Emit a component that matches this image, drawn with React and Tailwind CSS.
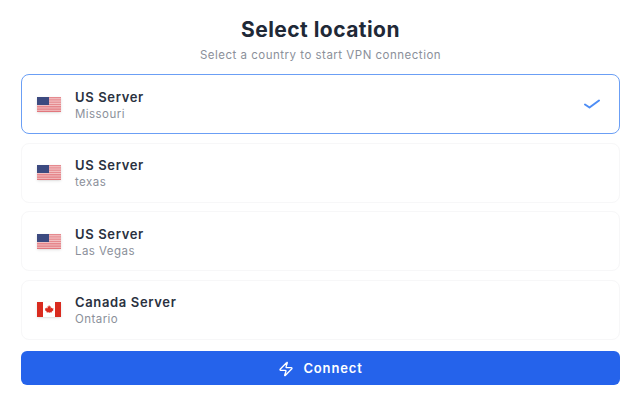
import React from 'react';
import { Zap } from 'lucide-react';

const UsFlag = () => (
  <svg width="24" height="15" viewBox="0 0 24 15" className="shrink-0 shadow-sm">
    <rect width="24" height="15" fill="#f3c4c6" />
    <rect y="0" width="24" height="1.2" fill="#e58a8f" />
    <rect y="2.3" width="24" height="1.2" fill="#e58a8f" />
    <rect y="4.6" width="24" height="1.2" fill="#e58a8f" />
    <rect y="6.9" width="24" height="1.2" fill="#e58a8f" />
    <rect y="9.2" width="24" height="1.2" fill="#e2777d" />
    <rect y="11.5" width="24" height="1.2" fill="#e2777d" />
    <rect y="13.8" width="24" height="1.2" fill="#e2777d" />
    <rect width="12" height="8" fill="#3c4a80" />
  </svg>
);

const CaFlag = () => (
  <svg width="24" height="15" viewBox="0 0 24 15" className="shrink-0 shadow-sm">
    <rect width="24" height="15" fill="#fff" />
    <rect width="6" height="15" fill="#d92b1f" />
    <rect x="18" width="6" height="15" fill="#d92b1f" />
    <path
      d="M12 3l1 1.8 1-.5-.4 2.3 1.3-1 .3.9 1.3-.2-.4 1.4.5.3-2 1.7.2.8-2.3-.3V11h-.6V10.200l-2.300.3.200-.8-2-1.700.500-.3-.400-1.400 1.300.2.300-.9 1.300 1-.400-2.300 1 .5z"
      fill="#d92b1f"
    />
  </svg>
);

const servers = [
  { name: 'US Server', city: 'Missouri', flag: <UsFlag />, selected: true },
  { name: 'US Server', city: 'texas', flag: <UsFlag /> },
  { name: 'US Server', city: 'Las Vegas', flag: <UsFlag /> },
  { name: 'Canada Server', city: 'Ontario', flag: <CaFlag /> },
];

const App = () => {
  return (
    <div className="w-[640px] h-[400px] overflow-hidden bg-white flex flex-col pl-[21px] pr-[20px] font-['Inter',sans-serif]">
      <h1 className="mt-[18px] text-center text-[21px] leading-[24px] font-bold tracking-[0.45px] text-[#1f2937]">
        Select location
      </h1>
      <p className="mt-[5px] text-center text-[11.5px] leading-[16px] tracking-[0.5px] text-[#8b909a]">
        Select a country to start VPN connection
      </p>

      <div className="mt-[11px] flex flex-col gap-[8.5px]">
        {servers.map((s, i) => (
          <div
            key={i}
            className={`h-[60px] rounded-[8px] border flex items-center pl-[15px] pr-[19px] ${
              s.selected ? 'border-[#6b9ff5]' : 'border-[#f7f7f8]'
            }`}
          >
            {s.flag}
            <div className="ml-[14px] flex-1 pt-[2px]">
              <div className="text-[13px] leading-[17px] font-semibold tracking-[0.65px] text-[#2a3140]">{s.name}</div>
              <div className="text-[11.5px] leading-[16px] tracking-[0.45px] text-[#8b909a]">{s.city}</div>
            </div>
            {s.selected && (
              <svg width="16" height="10" viewBox="0 0 16 10" fill="none" stroke="#4d8df5" strokeWidth="2" strokeLinecap="round" strokeLinejoin="round">
                <polyline points="1,5.500 5.500,8.500 15,1.500" />
              </svg>
            )}
          </div>
        ))}
      </div>

      <button className="mt-[11.5px] h-[34px] shrink-0 rounded-[6px] bg-[#2563eb] text-white flex items-center justify-center gap-[9px] pt-[1px] text-[13px] font-semibold tracking-[0.85px]">
        <Zap size={16} strokeWidth={2} />
        Connect
      </button>
    </div>
  );
};

export default App;
